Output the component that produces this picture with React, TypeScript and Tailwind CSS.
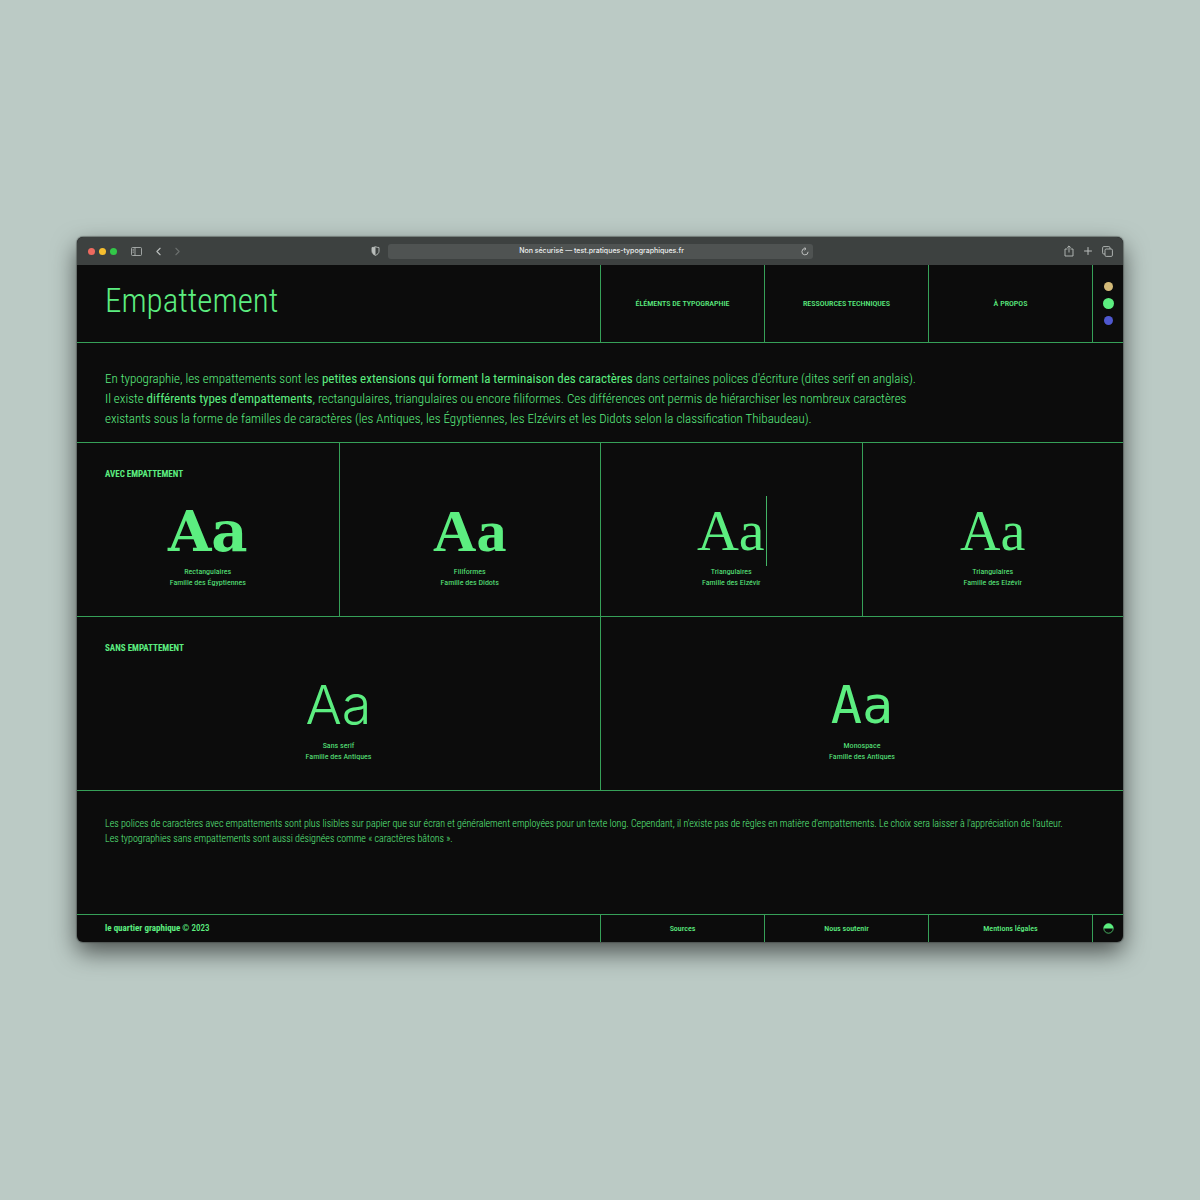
import { ChevronLeft, ChevronRight, Plus } from "lucide-react";

const withSerif = [
    { sample: "font-['DejaVu_Serif'] font-bold text-[56px]", name: "Rectangulaires", family: "Famille des Égyptiennes" },
    { sample: "font-['Liberation_Serif'] font-bold text-[60px]", name: "Filiformes", family: "Famille des Didots" },
    { sample: "font-['Liberation_Serif'] text-[58px]", name: "Triangulaires", family: "Famille des Elzévir", editing: true },
    { sample: "font-['Liberation_Serif'] text-[56px]", name: "Triangulaires", family: "Famille des Elzévir" },
];

const withoutSerif = [
    { sample: "font-['Inter'] font-light text-[54px]", name: "Sans serif", family: "Famille des Antiques" },
    { sample: "font-['DejaVu_Sans_Mono'] text-[52px]", name: "Monospace", family: "Famille des Antiques" },
];

const themes = [
    { label: "Thème sable", style: "size-[9px] bg-[#d3ba78]" },
    { label: "Thème vert", style: "size-[11px] bg-[#5cee80]" },
    { label: "Thème bleu", style: "size-[9px] bg-[#4f58cf]" },
];

type Specimen = { sample: string; name: string; family: string; editing?: boolean };

function SpecimenCell({ item, title }: { item: Specimen; title?: string }) {
    return (
        <div className="flex h-[173px] flex-col border-l border-[#36a058] pt-[25px] first:border-l-0">
            <h2 className="h-[28px] pl-[28px] text-[9px] leading-[12px] font-bold uppercase">{title}</h2>
            <div className="flex h-[70px] items-center justify-center">
                {item.editing ? (
                    <input
                        aria-label={item.name}
                        defaultValue="Aa"
                        className={`h-[70px] w-[72px] border-r border-[#43b566] bg-transparent text-center leading-[70px] outline-none ${item.sample}`}
                    />
                ) : (
                    <span className={`leading-[70px] ${item.sample}`}>Aa</span>
                )}
            </div>
            <p className="text-center text-[8px] leading-[11px]">
                {item.name}
                <br />
                {item.family}
            </p>
        </div>
    );
}

function TitleBar() {
    return (
        <div className="flex h-[28px] items-center bg-[#3d4140] text-[#b9bdbb]">
            <div className="flex flex-1 items-center pl-[11px]">
                <div className="flex gap-1">
                    <span className="size-[7px] rounded-full bg-[#ee6a5f]" />
                    <span className="size-[7px] rounded-full bg-[#f5be2f]" />
                    <span className="size-[7px] rounded-full bg-[#32c748]" />
                </div>
                <button aria-label="Barre latérale" className="ml-[14px]">
                    <svg width="11" height="9" viewBox="0 0 11 9" fill="none" stroke="currentColor" strokeWidth="0.8">
                        <rect x="0.5" y="0.5" width="10" height="8" rx="1" />
                        <path d="M4 0.5v8M1.6 2.3h1.2M1.6 3.8h1.2M1.6 5.3h1.2" />
                    </svg>
                </button>
                <button aria-label="Précédent" className="ml-[10px]">
                    <ChevronLeft size={13} strokeWidth={2} />
                </button>
                <button aria-label="Suivant" className="ml-[6px] text-[#6b6f6d]">
                    <ChevronRight size={13} strokeWidth={2} />
                </button>
                <button aria-label="Confidentialité" className="mr-[8px] ml-auto">
                    <svg width="9" height="10" viewBox="0 0 9 10">
                        <path d="M4.5 0.7C5.6 1.3 6.8 1.5 8 1.5v3.7c0 2-1.5 3.2-3.5 4.2C2.5 8.4 1 7.2 1 5.2V1.5c1.200 0 2.400-.2 3.500-.8z" fill="none" stroke="currentColor" strokeWidth="0.9" />
                        <path d="M4.5 0.7V9.4C2.5 8.4 1 7.2 1 5.2V1.5c1.200 0 2.400-.2 3.500-.8z" fill="currentColor" />
                    </svg>
                </button>
            </div>
            <div className="flex h-[15px] w-[425px] items-center rounded-[3px] bg-[#4f5352] pr-[4px] pl-[14px] font-['Inter'] text-[7px] text-[#eef0ef]">
                <span className="flex-1 text-center font-medium">Non sécurisé — test.pratiques-typographiques.fr</span>
                <button aria-label="Recharger">
                    <svg width="8" height="9" viewBox="0 0 8 9" fill="none" stroke="#c9cccb" strokeWidth="0.9">
                        <path d="M4.6 1.7A3.1 3.1 0 1 0 7.1 4.8" />
                        <path d="M3.5 0.3 5 1.75 3.5 3.2" />
                    </svg>
                </button>
            </div>
            <div className="flex flex-1 items-center justify-end gap-[8px] pr-[10px]">
                <button aria-label="Partager">
                    <svg width="10" height="12" viewBox="0 0 10 12" fill="none" stroke="currentColor" strokeWidth="0.9">
                        <path d="M3.5 4H1v7h8V4H6.5M5 7.5V1M3.2 2.7 5 0.9l1.8 1.8" />
                    </svg>
                </button>
                <button aria-label="Nouvel onglet">
                    <Plus size={12} strokeWidth={2} />
                </button>
                <button aria-label="Onglets">
                    <svg width="11" height="11" viewBox="0 0 11 11" fill="none" stroke="currentColor" strokeWidth="0.9">
                        <rect x="3" y="3" width="7.4" height="7.4" rx="1.2" />
                        <path d="M3 8H1.8C1 8 0.6 7.6 0.6 6.8V1.8C0.6 1 1 0.6 1.8 0.6h5C7.6 0.6 8 1 8 1.8V3" />
                    </svg>
                </button>
            </div>
        </div>
    );
}

export default function App() {
    return (
        <div className="min-h-screen bg-[#bbcac5] px-[77px] pt-[237px]">
            <div className="overflow-hidden rounded-[6px] bg-[#0c0c0c] font-['Roboto_Condensed',Roboto,sans-serif] text-[#5cee80] shadow-[0_0_1px_1px_rgba(60,65,63,0.5),0_10px_24px_rgba(0,0,0,0.6)]">
                <TitleBar />

                <header className="grid h-[78px] grid-cols-2 border-b border-[#36a058]">
                    <h1 className="pt-[16px] pl-[28px] text-[33px] leading-[40px] font-light">Empattement</h1>
                    <div className="flex border-l border-[#36a058] text-[8px] font-medium">
                        <nav className="grid flex-1 grid-cols-3 uppercase">
                            <a href="#elements" className="flex items-center justify-center border-r border-[#36a058]">Éléments de typographie</a>
                            <a href="#ressources" className="flex items-center justify-center border-r border-[#36a058]">Ressources techniques</a>
                            <a href="#a-propos" className="flex items-center justify-center border-r border-[#36a058]">À propos</a>
                        </nav>
                        <div className="flex w-[30px] flex-col items-center justify-center gap-[7px]">
                            {themes.map((theme) => (
                                <button key={theme.label} aria-label={theme.label} className={`rounded-full ${theme.style}`} />
                            ))}
                        </div>
                    </div>
                </header>

                <main>
                    <p className="border-b border-[#36a058] pt-[26px] pb-[13px] pl-[28px] text-[13px] leading-[20px] font-light">
                        En typographie, les empattements sont les <strong>petites extensions qui forment la terminaison des caractères</strong> dans certaines polices d'écriture (dites serif en anglais).
                        <br />
                        Il existe <strong>différents types d'empattements</strong>, rectangulaires, triangulaires ou encore filiformes. Ces différences ont permis de hiérarchiser les nombreux caractères
                        <br />
                        existants sous la forme de familles de caractères (les Antiques, les Égyptiennes, les Elzévirs et les Didots selon la classification Thibaudeau).
                    </p>
                    <section className="grid grid-cols-4 border-b border-[#36a058]">
                        {withSerif.map((item, index) => (
                            <SpecimenCell key={index} item={item} title={index === 0 ? "Avec empattement" : undefined} />
                        ))}
                    </section>
                    <section className="grid grid-cols-2 border-b border-[#36a058]">
                        {withoutSerif.map((item, index) => (
                            <SpecimenCell key={index} item={item} title={index === 0 ? "Sans empattement" : undefined} />
                        ))}
                    </section>
                    <p className="pt-[25px] pb-[68px] pl-[28px] text-[10px] leading-[15px] font-light">
                        Les polices de caractères avec empattements sont plus lisibles sur papier que sur écran et généralement employées pour un texte long. Cependant, il n'existe pas de règles en matière d'empattements. Le choix sera laisser à l'appréciation de l'auteur.
                        <br />
                        Les typographies sans empattements sont aussi désignées comme « caractères bâtons ».
                    </p>
                </main>

                <footer className="grid h-[28px] grid-cols-2 border-t border-[#36a058] text-[8px] font-medium">
                    <p className="flex items-center gap-[2px] pl-[28px] text-[9px]">
                        <strong>le quartier graphique</strong> © 2023
                    </p>
                    <div className="flex border-l border-[#36a058]">
                        <nav className="grid flex-1 grid-cols-3">
                            <a href="#sources" className="flex items-center justify-center border-r border-[#36a058]">Sources</a>
                            <a href="#soutenir" className="flex items-center justify-center border-r border-[#36a058]">Nous soutenir</a>
                            <a href="#mentions" className="flex items-center justify-center border-r border-[#36a058]">Mentions légales</a>
                        </nav>
                        <button aria-label="Contraste" className="flex w-[30px] items-center justify-center">
                            <svg width="11" height="11" viewBox="0 0 11 11">
                                <circle cx="5.5" cy="5.5" r="4.7" fill="none" stroke="currentColor" strokeWidth="0.7" />
                                <path d="M0.6 5.5a4.9 4.9 0 0 1 9.8 0z" fill="currentColor" />
                            </svg>
                        </button>
                    </div>
                </footer>
            </div>
        </div>
    );
}
